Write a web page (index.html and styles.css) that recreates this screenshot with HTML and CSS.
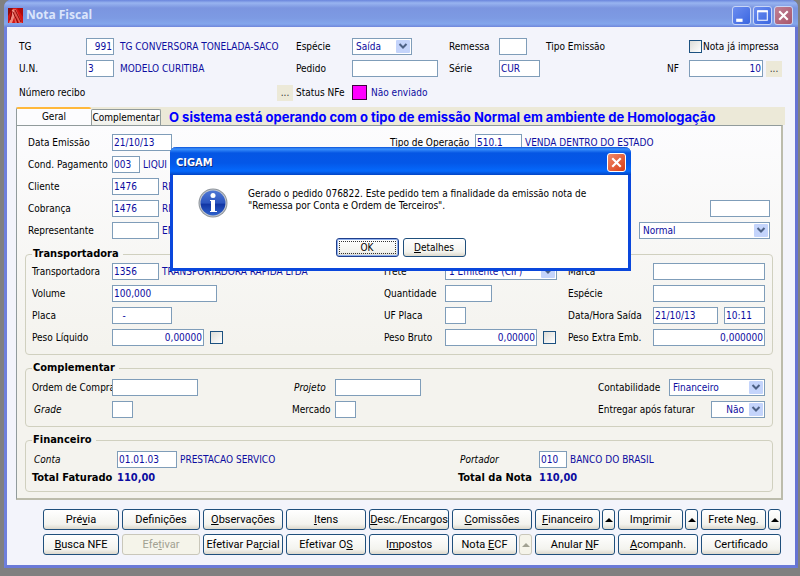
FILE: index.html
```html
<!DOCTYPE html>
<html lang="pt-BR">

<head>
  <meta charset="UTF-8">
  <meta name="viewport" content="width=device-width, initial-scale=1.0">
  <title>Nota Fiscal</title>
  <link rel="stylesheet" href="styles.css">
</head>

<body>
  <main class="window">
    <header class="titlebar">
      <svg class="app-icon" viewBox="0 0 15 15" width="15" height="15">
        <rect width="15" height="15" fill="#d41414"/>
        <path d="M0 0h5L0 8z" fill="#8e0c0c"/>
        <path d="M9 0h6v9z" fill="#b00a0a"/>
        <path d="M4 2l2-1 3 5-2 1-3 8H1l3-8z" fill="#ee8a80"/>
        <path d="M6 1l2 0 6 14h-3L8 8l1 7H7L6 8z" fill="#e25c54"/>
        <path d="M5 4l5 11M4 3l-2 9M7 2l6 12" stroke="#8c0808" fill="none"/>
      </svg>
      <h1>Nota Fiscal</h1>
      <div class="window-controls">
        <button class="ctl" aria-label="Minimizar"><svg viewBox="0 0 16 16"><path d="M3 11h6v3H3z" fill="#fff"/></svg></button>
        <button class="ctl" aria-label="Maximizar"><svg viewBox="0 0 16 16"><path d="M3.500 4h9v8.500h-9z" fill="none" stroke="#fff"/><path d="M3 3h10v2H3z" fill="#fff"/></svg></button>
        <button class="ctl ctl-close" aria-label="Fechar"><svg viewBox="0 0 16 16"><path d="M4 4l8 8M12 4l-8 8" stroke="#fff" stroke-width="2"/></svg></button>
      </div>
    </header>

    <section class="top-form">
      <div class="row">
        <label for="tg">TG</label>
        <input class="field w28 right" type="text" id="tg" value="991">
        <span class="value c3">TG CONVERSORA TONELADA-SACO</span>
        <label class="c4" for="especie">Espécie</label>
        <select class="field w60" id="especie"><option>Saída</option></select>
        <label class="c6" for="remessa">Remessa</label>
        <input class="field w28" type="text" id="remessa">
        <span class="c8">Tipo Emissão</span>
        <div class="c10 inline tight">
          <input class="check" type="checkbox" id="impressa">
          <label for="impressa">Nota já impressa</label>
        </div>
      </div>
      <div class="row">
        <label for="un">U.N.</label>
        <input class="field w28" type="text" id="un" value="3">
        <span class="value c3">MODELO CURITIBA</span>
        <label class="c4" for="pedido">Pedido</label>
        <input class="field w86" type="text" id="pedido">
        <label class="c6" for="serie">Série</label>
        <input class="field w41" type="text" id="serie" value="CUR">
        <label class="c9" for="nf">NF</label>
        <div class="c10 inline">
          <input class="field grow right" type="text" id="nf" value="10">
          <button class="more" aria-label="Mais">...</button>
        </div>
      </div>
      <div class="row row-status">
        <span class="recibo">Número recibo</span>
        <button class="more c3 push" aria-label="Mais">...</button>
        <span class="c4">Status NFe</span>
        <span class="value status"><i class="swatch"></i>Não enviado</span>
      </div>
    </section>

    <nav class="tabs">
      <button class="tab active">Geral</button>
      <button class="tab">Complementar</button>
      <h2 class="notice">O sistema está operando com o tipo de emissão Normal em ambiente de Homologação</h2>
    </nav>

    <section class="panel">
      <div class="general">
        <div class="row">
          <label for="emissao">Data Emissão</label>
          <input class="field w60" type="text" id="emissao" value="21/10/13">
          <label class="c3" for="operacao">Tipo de Operação</label>
          <div class="inline">
            <input class="field w47" type="text" id="operacao" value="510.1">
            <span class="value">VENDA DENTRO DO ESTADO</span>
          </div>
        </div>
        <div class="row">
          <label for="cond">Cond. Pagamento</label>
          <div class="inline">
            <input class="field w28" type="text" id="cond" value="003">
            <span class="value">LIQUI</span>
          </div>
        </div>
        <div class="row">
          <label for="cliente">Cliente</label>
          <div class="inline">
            <input class="field w47" type="text" id="cliente" value="1476">
            <span class="value">RI</span>
          </div>
        </div>
        <div class="row">
          <label for="cobranca">Cobrança</label>
          <div class="inline">
            <input class="field w47" type="text" id="cobranca" value="1476">
            <span class="value">RI</span>
          </div>
          <input class="field w60 c4 push" type="text" aria-label="Valor">
        </div>
        <div class="row">
          <label for="repr">Representante</label>
          <div class="inline">
            <input class="field w47" type="text" id="repr">
            <span class="value">EN</span>
          </div>
          <select class="field w131 c4 push" aria-label="Tipo"><option>Normal</option></select>
        </div>
      </div>

      <fieldset class="carrier">
        <legend>Transportadora</legend>
        <div class="row">
          <label for="transp">Transportadora</label>
          <div class="inline">
            <input class="field w47" type="text" id="transp" value="1356">
            <span class="value">TRANSPORTADORA RAPIDA LTDA</span>
          </div>
          <label for="frete">Frete</label>
          <select class="field w112" id="frete"><option>1 Emitente (CIF)</option></select>
          <label for="marca">Marca</label>
          <input class="field" type="text" id="marca">
        </div>
        <div class="row">
          <label for="volume">Volume</label>
          <input class="field w105" type="text" id="volume" value="100,000">
          <label for="qtd">Quantidade</label>
          <input class="field w47" type="text" id="qtd">
          <label for="especie2">Espécie</label>
          <input class="field" type="text" id="especie2">
        </div>
        <div class="row">
          <label for="placa">Placa</label>
          <input class="field w60" type="text" id="placa" value="   -">
          <label for="uf">UF Placa</label>
          <input class="field w21" type="text" id="uf">
          <label for="saida">Data/Hora Saída</label>
          <div class="inline wide">
            <input class="field grow" type="text" id="saida" value="21/10/13">
            <input class="field w41" type="text" aria-label="Hora" value="10:11">
          </div>
        </div>
        <div class="row">
          <label for="liquido">Peso Líquido</label>
          <div class="inline wide">
            <input class="field w92 right" type="text" id="liquido" value="0,00000">
            <input class="check" type="checkbox" aria-label="Peso Líquido">
          </div>
          <label for="bruto">Peso Bruto</label>
          <div class="inline wide">
            <input class="field w92 right" type="text" id="bruto" value="0,00000">
            <input class="check" type="checkbox" aria-label="Peso Bruto">
          </div>
          <label for="extra">Peso Extra Emb.</label>
          <input class="field right" type="text" id="extra" value="0,000000">
        </div>
      </fieldset>

      <fieldset class="extra">
        <legend>Complementar</legend>
        <div class="row">
          <label for="ordem">Ordem de Compra</label>
          <input class="field w86" type="text" id="ordem">
          <label class="slanted" for="projeto">Projeto</label>
          <input class="field w86" type="text" id="projeto">
          <div class="spread">
            <label for="contab">Contabilidade</label>
            <select class="field w96" id="contab"><option>Financeiro</option></select>
          </div>
        </div>
        <div class="row">
          <label class="slanted" for="grade">Grade</label>
          <input class="field w21" type="text" id="grade">
          <label for="mercado">Mercado</label>
          <input class="field w21" type="text" id="mercado">
          <div class="spread">
            <label for="entregar">Entregar após faturar</label>
            <select class="field w54 right" id="entregar"><option>Não</option></select>
          </div>
        </div>
      </fieldset>

      <fieldset class="finance">
        <legend>Financeiro</legend>
        <div class="row">
          <label class="slanted" for="conta">Conta</label>
          <div class="inline">
            <input class="field w60" type="text" id="conta" value="01.01.03">
            <span class="value">PRESTACAO SERVICO</span>
          </div>
          <label class="slanted" for="portador">Portador</label>
          <div class="inline">
            <input class="field w28" type="text" id="portador" value="010">
            <span class="value">BANCO DO BRASIL</span>
          </div>
        </div>
        <div class="row total">
          <span>Total Faturado</span>
          <span class="value">110,00</span>
          <span>Total da Nota</span>
          <span class="value">110,00</span>
        </div>
      </fieldset>
    </section>

    <footer class="actions">
      <button class="btn">Pré<u>v</u>ia</button>
      <button class="btn">Definições</button>
      <button class="btn"><u>O</u>bservações</button>
      <button class="btn"><u>I</u>tens</button>
      <button class="btn"><u>D</u>esc./Encargos</button>
      <button class="btn"><u>C</u>omissões</button>
      <div class="split"><button class="btn"><u>F</u>inanceiro</button><button class="btn up" aria-label="Opções"></button></div>
      <div class="split"><button class="btn">Im<u>p</u>rimir</button><button class="btn up" aria-label="Opções"></button></div>
      <div class="split"><button class="btn">Frete Ne<u>g</u>.</button><button class="btn up" aria-label="Opções"></button></div>
      <button class="btn"><u>B</u>usca NFE</button>
      <button class="btn" disabled>Efe<u>t</u>ivar</button>
      <button class="btn">Efetivar Pa<u>r</u>cial</button>
      <button class="btn">Efetivar O<u>S</u></button>
      <button class="btn">I<u>m</u>postos</button>
      <div class="split"><button class="btn">Nota <u>E</u>CF</button><button class="btn up" aria-label="Opções" disabled></button></div>
      <button class="btn">Anular <u>N</u>F</button>
      <button class="btn"><u>A</u>companh.</button>
      <button class="btn">Certificado</button>
    </footer>

    <div class="dialog" role="dialog" aria-labelledby="dialog-title">
      <div class="dialog-title">
        <h2 id="dialog-title">CIGAM</h2>
        <button class="ctl ctl-close" aria-label="Fechar"><svg viewBox="0 0 16 16"><path d="M4 4l8 8M12 4l-8 8" stroke="#fff" stroke-width="2"/></svg></button>
      </div>
      <div class="dialog-body">
        <svg class="info" viewBox="0 0 30 30" width="30" height="30">
          <defs>
            <linearGradient id="ball" x1="0" y1="0" x2="0" y2="1">
              <stop offset="0" stop-color="#4f78d4"/>
              <stop offset="0.500" stop-color="#2c55c0"/>
              <stop offset="0.550" stop-color="#1236a4"/>
              <stop offset="1" stop-color="#2f62cc"/>
            </linearGradient>
          </defs>
          <circle cx="15" cy="15" r="14.500" fill="#8f959c"/>
          <circle cx="15" cy="15" r="13.500" fill="#c4c9d0"/>
          <circle cx="15" cy="15" r="12.500" fill="url(#ball)"/>
          <circle cx="15" cy="7.500" r="2.500" fill="#fff"/>
          <path d="M12 12h5v11h2v1h-7v-1h1V13h-1z" fill="#fff"/>
        </svg>
        <p>Gerado o pedido 076822. Este pedido tem a finalidade da emissão nota de<br>"Remessa por Conta e Ordem de Terceiros".</p>
      </div>
      <div class="dialog-buttons">
        <button class="btn focused">OK</button>
        <button class="btn"><u>D</u>etalhes</button>
      </div>
    </div>
  </main>
</body>

</html>
```

FILE: styles.css
```css
* {
  box-sizing: border-box;
}

body {
  margin: 0;
  padding: 0 2px 8px 4px;
  background: #808080;
  font-family: "DejaVu Sans Condensed", "DejaVu Sans", sans-serif;
  font-size: 10px;
  line-height: 12px;
  color: #000;
}

h1, h2, p {
  margin: 0;
}

input, select, button {
  font: inherit;
  margin: 0;
}

.window {
  position: relative;
  border: 3px solid #6f80dc;
  border-top: 0;
  border-right-color: #6673d3;
  border-bottom-color: #6b7ad8;
  border-radius: 7px 7px 0 0;
  background: #f3f4fb;
}

/* title bar */
.titlebar {
  display: flex;
  align-items: center;
  gap: 3px;
  height: 27px;
  margin: 0 -3px;
  padding: 3px 5px 0 4px;
  border-radius: 7px 7px 0 0;
  background: linear-gradient(#6a85dc 0, #98b4f0 3px, #7b95e0 8px, #7d9ae3 18px, #83a6ec 24px, #6f86db 27px);
}

.titlebar h1 {
  flex: 1;
  font-family: "Open Sans", sans-serif;
  font-size: 12px;
  line-height: 16px;
  color: #dbe5fb;
}

.window-controls {
  display: flex;
  gap: 2px;
}

.ctl {
  width: 19px;
  height: 19px;
  padding: 0;
  border: 1px solid #c9d6f6;
  border-radius: 3px;
  background: linear-gradient(135deg, #6c8df0, #3a66e0);
}

.ctl svg {
  display: block;
}

.window-controls .ctl-close {
  background: linear-gradient(135deg, #c08094, #a8566c);
}

/* fields */
.row {
  display: grid;
  grid-auto-rows: 17px;
  align-items: center;
  white-space: nowrap;
}

.inline {
  display: flex;
  align-items: center;
  gap: 3px;
}

.inline.wide {
  gap: 6px;
}

.inline.tight {
  gap: 1px;
}

.spread {
  display: flex;
  align-items: center;
  justify-content: space-between;
}

.field {
  width: 100%;
  height: 17px;
  padding: 0 1px;
  border: 1px solid #7f9db9;
  border-radius: 0;
  outline: 0;
  background: #fff;
  color: #0c0ca0;
}

select.field {
  appearance: none;
  padding: 0 20px 0 3px;
  background: #fff url("data:image/svg+xml,%3Csvg xmlns='http://www.w3.org/2000/svg' width='14' height='13'%3E%3Crect width='14' height='13' rx='1' fill='%23c4d4fb'/%3E%3Cpath d='M3.500 4l3.500 3.500L10.500 4' fill='none' stroke='%234d6185' stroke-width='2'/%3E%3C/svg%3E") right 1px center no-repeat;
}

.value {
  color: #0c0ca0;
}

.right {
  text-align: right;
}

.grow {
  flex: 1;
  min-width: 0;
}

.push {
  justify-self: end;
}

.slanted {
  padding-left: 2px;
  font-style: italic;
}

.w21 { width: 21px; }
.w28 { width: 28px; }
.w41 { width: 41px; }
.w47 { width: 47px; }
.w54 { width: 54px; }
.w60 { width: 60px; }
.w86 { width: 86px; }
.w92 { width: 92px; }
.w96 { width: 96px; }
.w105 { width: 105px; }
.w112 { width: 112px; }
.w131 { width: 131px; }

.c3 { grid-column: 3; }
.c4 { grid-column: 4; }
.c6 { grid-column: 6; }
.c8 { grid-column: 8; }
.c9 { grid-column: 9; }
.c10 { grid-column: 10; }

.check {
  appearance: none;
  flex: none;
  width: 13px;
  height: 13px;
  border: 1px solid #1c5180;
  background: linear-gradient(135deg, #dcdcd7, #fff);
}

.more {
  width: 16px;
  height: 16px;
  padding: 0;
  border: 0;
  background: #ece9d8;
  color: #333;
}

/* header form */
.top-form {
  display: grid;
  row-gap: 5px;
  padding: 11px 13px 4px 12px;
}

.top-form .row {
  grid-template-columns: 67px 34px 176px 56px 97px 50px 47px 1fr 22px 93px;
}

.top-form .row-status {
  grid-auto-rows: 21px;
}

.recibo {
  grid-column: 1 / 3;
}

.top-form .more.push {
  margin-right: 3px;
}

.status {
  display: flex;
  align-items: center;
  gap: 4px;
}

.swatch {
  width: 15px;
  height: 15px;
  border: 1px solid #400040;
  background: #ff00ff;
}

/* tabs */
.tabs {
  display: flex;
  align-items: flex-end;
  height: 18px;
  margin: 0 10px 0 9px;
  background: #ece9d8;
}

.tab {
  width: 70px;
  height: 16px;
  padding: 0;
  border: 1px solid #919b9c;
  border-bottom: 0;
  border-radius: 2px 2px 0 0;
  background: linear-gradient(#fff, #f0f0ea);
}

.tab.active {
  width: 75px;
  height: 18px;
  border-top: 2px solid #ffb83c;
  border-right: 0;
  background: #fcfcfe;
}

.notice {
  flex: 1;
  padding-left: 8px;
  font-family: Inter, "Liberation Sans", sans-serif;
  font-size: 13px;
  line-height: 16px;
  color: #0000ff;
  white-space: nowrap;
}

.panel {
  margin: 0 12px 0 9px;
  padding: 8px 8px 6px;
  border: 1px solid #919b9c;
  border-right: 2px solid #bcbcac;
  border-bottom: 2px solid #bcbcac;
  background: linear-gradient(#fcfcfe, #f4f3ee 60%);
}

.general {
  display: grid;
  row-gap: 5px;
  padding: 0 3px;
}

.general .row {
  grid-template-columns: 84px 278px 85px 1fr;
}

fieldset {
  display: grid;
  row-gap: 5px;
  min-width: 0;
  margin: 6px 0 0;
  padding: 4px 7px 8px 6px;
  border: 1px solid #d0d0bf;
  border-radius: 4px;
}

legend {
  padding: 0 4px 0 1px;
  font-size: 11px;
  line-height: 14px;
  font-weight: bold;
}

.carrier {
  margin-top: 8px;
  padding-top: 2px;
}

.carrier .row {
  grid-template-columns: 80px 272px 61px 1fr 85px 112px;
}

.extra .row {
  grid-template-columns: 80px 180px 43px 1fr 167px;
}

.finance {
  row-gap: 1px;
  padding-bottom: 5px;
}

.finance .row {
  grid-template-columns: 85px 341px 81px 1fr;
}

.total {
  font-size: 11px;
  font-weight: bold;
}

/* buttons */
.actions {
  display: grid;
  grid-template-columns: 76px 78px repeat(7, 1fr);
  gap: 4px 3px;
  padding: 9px 14px 10px 36px;
}

.btn {
  width: 100%;
  height: 21px;
  padding: 0;
  border: 1px solid #1f4f7c;
  border-radius: 3px;
  background: linear-gradient(#fff, #f3f3ee 75%, #dcd8cc);
  color: #000;
  font-family: Roboto, "Liberation Sans", sans-serif;
  font-size: 11px;
  white-space: nowrap;
}

.btn:disabled {
  border-color: #c9c7ba;
  background: #f5f4ea;
  color: #a1a192;
}

.split {
  display: flex;
  gap: 2px;
}

.split .up {
  display: flex;
  flex: none;
  align-items: center;
  justify-content: center;
  width: 13px;
}

.up::before {
  content: "";
  border: 4px solid transparent;
  border-top: 0;
  border-bottom-color: currentColor;
}

/* message box */
.dialog {
  position: absolute;
  top: 147px;
  left: 163px;
  width: 461px;
  border: 3px solid #0a47dc;
  border-top: 0;
  border-radius: 6px 6px 0 0;
  background: #fff;
}

.dialog-title {
  display: flex;
  align-items: center;
  justify-content: space-between;
  height: 28px;
  margin: 0 -3px;
  padding: 3px 5px 0 6px;
  border-radius: 6px 6px 0 0;
  background: linear-gradient(#0a52d8 0, #3a90fc 2px, #0556e4 6px, #0457e8 16px, #0569fc 24px, #0344c4 28px);
}

.dialog-title h2 {
  font-size: 11px;
  color: #fff;
  text-shadow: 1px 1px #0a2a80;
}

.dialog-title .ctl {
  border-color: #fff;
  background: linear-gradient(135deg, #f08a6a, #d83c14);
}

.dialog-body {
  display: flex;
  gap: 20px;
  padding: 13px 24px 0 25px;
}

.dialog-body p {
  white-space: nowrap;
}

.info {
  flex: none;
}

.dialog-buttons {
  display: flex;
  justify-content: center;
  gap: 4px;
  padding: 20px 0 11px;
}

.dialog-buttons .btn {
  width: 63px;
  height: 19px;
  font-family: inherit;
  font-size: 10px;
}

.btn.focused {
  border-color: #1f3f8c;
  box-shadow: inset 0 0 0 1px #8fb0ee;
  outline: 1px dotted #333;
  outline-offset: -4px;
}
```
